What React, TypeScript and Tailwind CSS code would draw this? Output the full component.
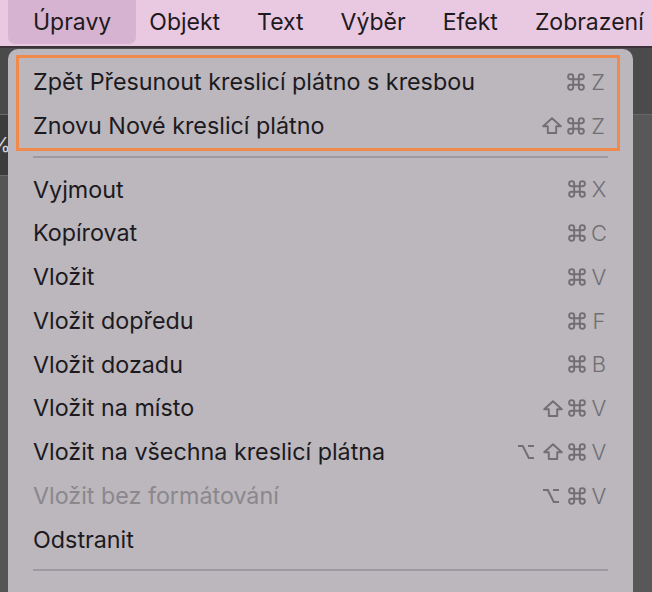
import type { ReactNode } from "react"

type Key = "cmd" | "shift" | "opt" | string

interface MenuItem {
  label: string
  keys: Key[]
  disabled?: boolean
}

const CmdIcon = () => (
  <svg viewBox="2 2 16 16" className="h-[18px] w-[18px]" fill="none" stroke="currentColor" strokeWidth={1.7}>
    <path d="M7.5 7.5h5v5h-5z" />
    <path d="M7.5 7.5V5.25a2.25 2.25 0 1 0-2.25 2.25h2.25" />
    <path d="M12.5 7.5V5.25a2.25 2.25 0 1 1 2.25 2.25H12.5" />
    <path d="M12.5 12.5v2.25a2.25 2.25 0 1 0 2.25-2.25H12.5" />
    <path d="M7.5 12.5v2.25a2.25 2.25 0 1 1-2.25-2.25H7.5" />
  </svg>
)

const ShiftIcon = () => (
  <svg viewBox="0 0 20 17" className="h-[17px] w-[20px]" fill="none" stroke="currentColor" strokeWidth={1.9} strokeLinejoin="round">
    <path d="M10 1.2 18.8 9.3h-4.6V16H5.8V9.3H1.2z" />
  </svg>
)

const OptIcon = () => (
  <svg viewBox="0 0 16 14" className="mr-[4px] h-[14px] w-[16px]" fill="none" stroke="currentColor" strokeWidth={2}>
    <path d="M0 1h4.8l6 12H16M10 1h6" />
  </svg>
)

function Shortcut({ keys }: { keys: Key[] }) {
  return (
    <div className="flex items-center gap-[5px] text-[#716e74]">
      {keys.map((k, i) => {
        if (k === "cmd") return <CmdIcon key={i} />
        if (k === "shift") return <ShiftIcon key={i} />
        if (k === "opt") return <OptIcon key={i} />
        return (
          <span key={i} className="w-[16px] text-center text-[22px] font-light leading-none">
            {k}
          </span>
        )
      })}
    </div>
  )
}

function Row({ item, children }: { item: MenuItem; children?: ReactNode }) {
  return (
    <div className="flex h-[43.75px] items-center justify-between">
      <span className={item.disabled ? "text-[#8a878d]" : "text-[#1c1a1f]"}>{item.label}</span>
      <Shortcut keys={item.keys} />
      {children}
    </div>
  )
}

const undoItems: MenuItem[] = [
  { label: "Zpět Přesunout kreslicí plátno s kresbou", keys: ["cmd", "Z"] },
  { label: "Znovu Nové kreslicí plátno", keys: ["shift", "cmd", "Z"] },
]

const editItems: MenuItem[] = [
  { label: "Vyjmout", keys: ["cmd", "X"] },
  { label: "Kopírovat", keys: ["cmd", "C"] },
  { label: "Vložit", keys: ["cmd", "V"] },
  { label: "Vložit dopředu", keys: ["cmd", "F"] },
  { label: "Vložit dozadu", keys: ["cmd", "B"] },
  { label: "Vložit na místo", keys: ["shift", "cmd", "V"] },
  { label: "Vložit na všechna kreslicí plátna", keys: ["opt", "shift", "cmd", "V"] },
  { label: "Vložit bez formátování", keys: ["opt", "cmd", "V"], disabled: true },
  { label: "Odstranit", keys: [] },
]

const menus = ["Objekt", "Text", "Výběr", "Efekt", "Zobrazení"]

export default function App() {
  return (
    <div
      className="h-[592px] w-[652px] overflow-hidden bg-[#4c4c4c] text-[23.3px] leading-none"
      style={{ fontFamily: "Inter, 'Noto Sans', sans-serif" }}
    >
      {/* menu bar */}
      <div className="flex h-[46px] items-start whitespace-nowrap bg-[#e9c8e2] text-[23px] text-[#1e1a20]">
        <div className="ml-2 flex h-[44px] items-center rounded-b-[7px] bg-[#d6b3d0] px-[25px]">Úpravy</div>
        <div className="ml-[13px] flex h-[44px] items-center gap-[37px]">
          {menus.map((m) => (
            <span key={m}>{m}</span>
          ))}
        </div>
      </div>
      <div className="h-[2px] bg-[#3b3339]" />

      <div className="flex h-[544px]">
        {/* left edge of the window behind */}
        <div className="flex w-2 flex-col">
          <div className="h-[66px] bg-[#4a4a4a]" />
          <div className="h-px bg-[#6a6a6a]" />
          <div className="flex h-[60px] items-center overflow-hidden bg-[#3c3c3c] text-[20px] text-[#d8d8d8]">
            <span className="-ml-[9px]">%</span>
          </div>
          <div className="h-px bg-[#6a6a6a]" />
          <div className="flex-1 bg-[#555555]" />
        </div>

        {/* dropdown */}
        <div className="mt-px w-[625px] rounded-t-[10px] bg-[#bbb7bc] pl-2 pr-[13px] pt-[6px]">
          <div className="border-[3px] border-[#f08a4c] pl-[14px] pr-[11px] pt-[2px]">
            {undoItems.map((item) => (
              <Row key={item.label} item={item} />
            ))}
          </div>
          <div className="ml-[17px] mr-[12px] mt-[5px] h-[2px] bg-[#9c99a0]" />
          <div className="pl-[17px] pr-[13px] pt-[10px]">
            {editItems.map((item) => (
              <Row key={item.label} item={item} />
            ))}
          </div>
          <div className="ml-[17px] mr-[12px] mt-[8px] h-[2px] bg-[#9c99a0]" />
        </div>

        {/* right side of the window behind */}
        <div className="flex flex-1 flex-col">
          <div className="h-[66px] bg-[#4b4b4b]" />
          <div className="h-px bg-[#666666]" />
          <div className="flex-1 bg-[#585858]" />
        </div>
      </div>
    </div>
  )
}
